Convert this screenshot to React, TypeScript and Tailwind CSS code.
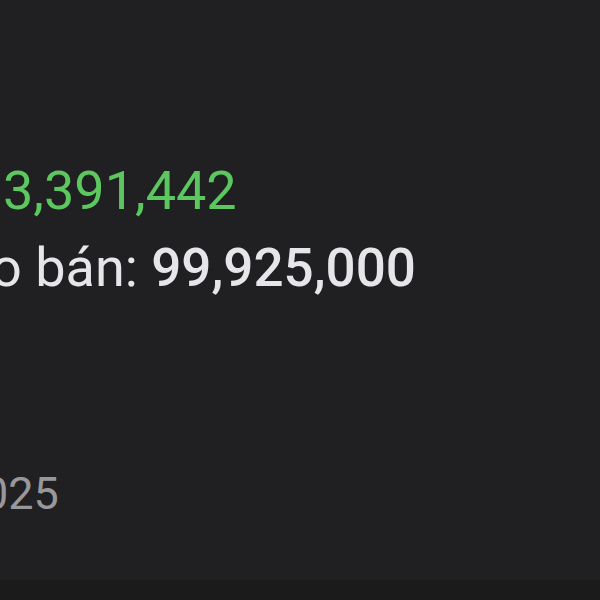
export default function App() {
  return (
    <div
      className="flex h-[600px] w-[600px] flex-col overflow-hidden bg-[#202022]"
      style={{ fontFamily: 'Roboto, "Noto Sans", sans-serif' }}
    >
      <div className="flex flex-1 flex-col pt-[164px]">
        <div className="ml-[3px] whitespace-nowrap text-[54px] leading-none text-[#5cc75f]">
          3,391,442
        </div>
        <div className="ml-[-9px] mt-[23px] whitespace-nowrap text-[54px] leading-none text-[#e6e6ea]">
          o bán: <span className="text-[53px] font-medium">99,925,000</span>
        </div>
        <div className="ml-[-17px] mt-[176px] whitespace-nowrap text-[45px] leading-none text-[#98989c]">
          025
        </div>
      </div>
      <div className="h-[20px] bg-[#1b1b1b]" />
    </div>
  );
}
